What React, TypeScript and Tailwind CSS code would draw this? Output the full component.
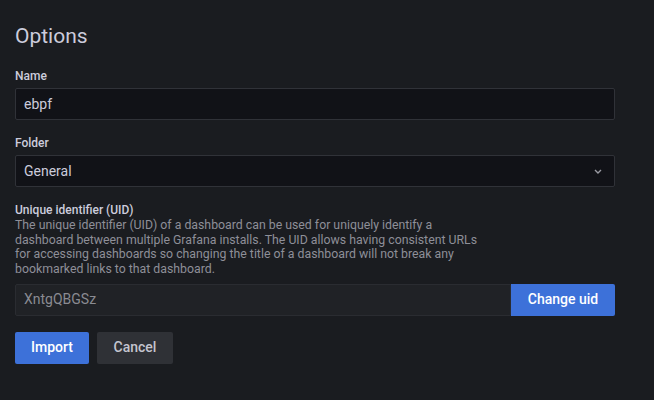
import React from "react";

export default function App() {
  return (
    <div
      className="w-[654px] h-[400px] bg-[#1a1c20] text-[#ccccdc] pl-[15px] pt-[23px]"
      style={{ fontFamily: "Roboto, 'Liberation Sans', sans-serif" }}
    >
      <div className="w-[600px] flex flex-col">
        <h3 className="text-[21px] leading-[26px] font-normal mb-[20px]">Options</h3>

        <label className="text-[12px] leading-[15px] font-medium mb-[4px]">Name</label>
        <div className="h-[32px] bg-[#111217] border border-[#303238] rounded-[2px] flex items-center px-[8px] text-[14px]">
          ebpf
        </div>

        <label className="text-[12px] leading-[15px] font-medium mt-[16px] mb-[4px]">Folder</label>
        <div className="h-[32px] bg-[#111217] border border-[#303238] rounded-[2px] flex items-center justify-between px-[8px] text-[14px]">
          <span>General</span>
          <svg width="8" height="5" viewBox="0 0 8 5" className="mr-[4px]">
            <path d="M1 1l3 3 3-3" stroke="#9a9ba3" strokeWidth="1.4" fill="none" />
          </svg>
        </div>

        <label className="text-[12px] leading-[15px] font-medium mt-[16px]">Unique identifier (UID)</label>
        <p className="text-[12.3px] leading-[14.7px] text-[#8e8f98] max-w-[468px]">
          The unique identifier (UID) of a dashboard can be used for uniquely identify a dashboard between multiple
          Grafana installs. The UID allows having consistent URLs for accessing dashboards so changing the title of a
          dashboard will not break any bookmarked links to that dashboard.
        </p>
        <div className="flex h-[32px] mt-[7px]">
          <div className="flex-1 bg-[#202226] border border-[#2a2c31] rounded-l-[2px] flex items-center px-[8px] text-[14px] text-[#8a8b92]">
            XntgQBGSz
          </div>
          <button className="w-[104px] bg-[#3d71d9] text-white text-[14px] font-medium rounded-r-[2px]">
            Change uid
          </button>
        </div>

        <div className="flex gap-[8px] mt-[16px]">
          <button className="h-[32px] w-[74px] bg-[#3d71d9] text-white text-[14px] font-medium rounded-[2px]">
            Import
          </button>
          <button className="h-[32px] w-[76px] bg-[#2f3136] text-[#c4c5cf] text-[14px] font-medium rounded-[2px]">
            Cancel
          </button>
        </div>
      </div>
    </div>
  );
}
